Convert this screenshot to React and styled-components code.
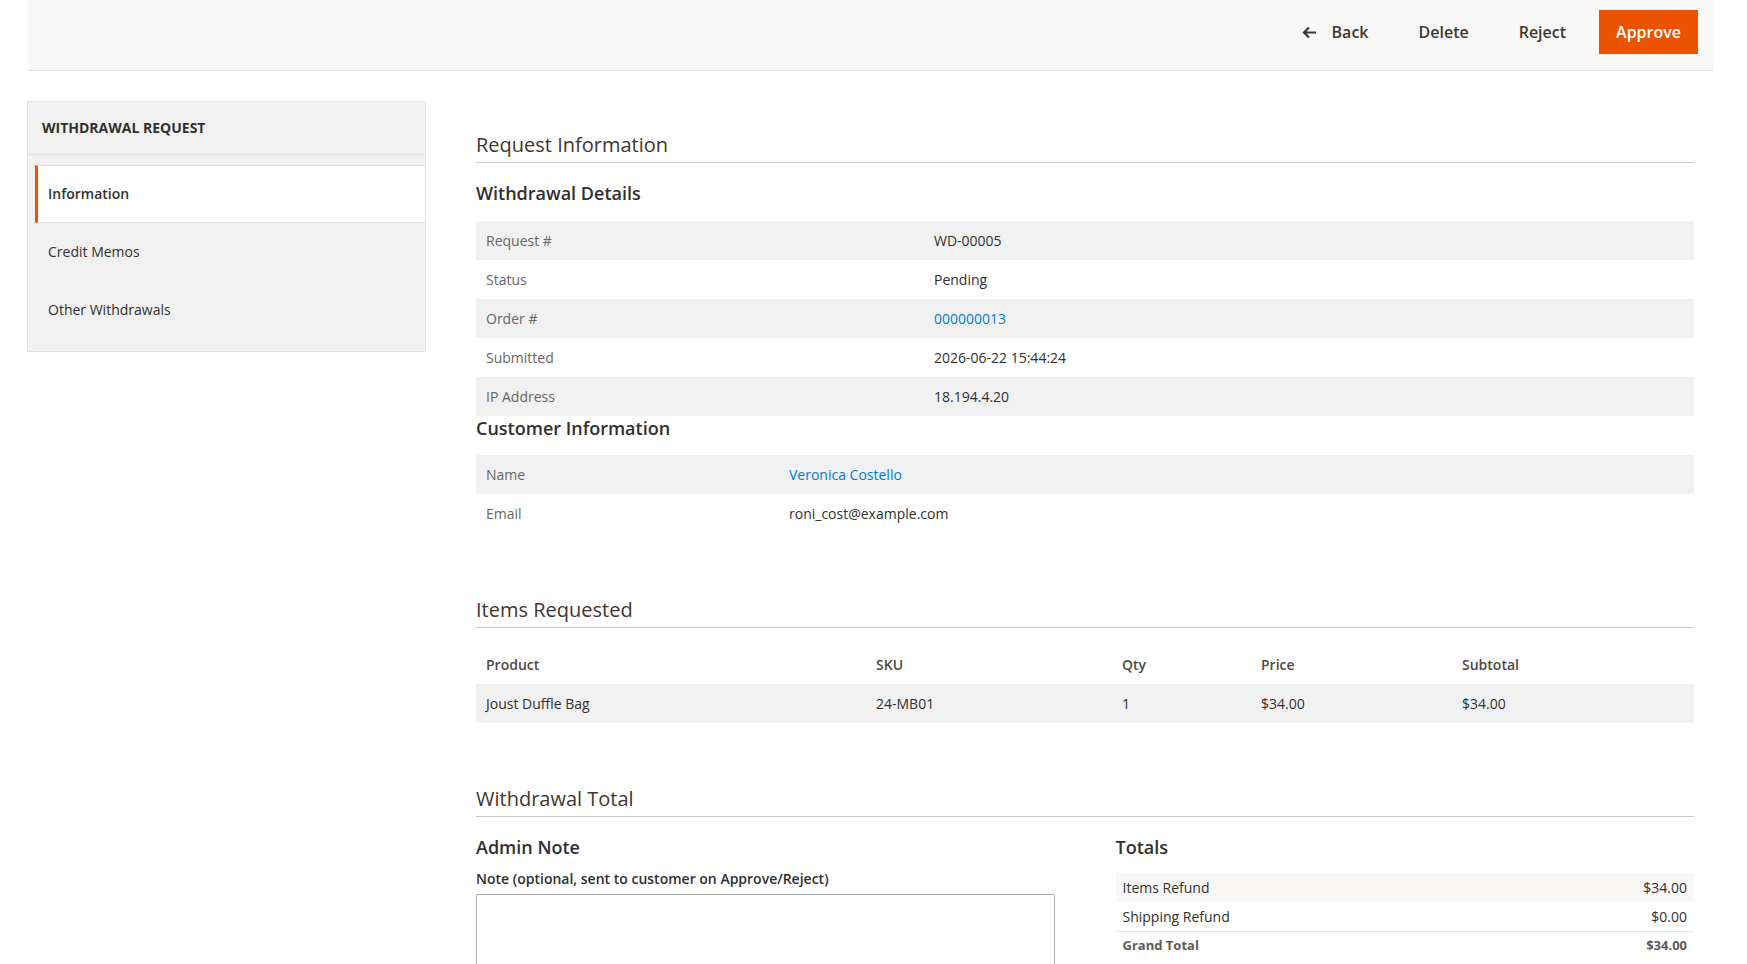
import React from "react";
import styled, { createGlobalStyle } from "styled-components";

const GlobalStyle = createGlobalStyle`
  html, body {
    margin: 0;
    padding: 0;
    background: #fff;
  }
  body {
    font-family: "Open Sans", "Liberation Sans", sans-serif;
    font-size: 14px;
    color: #303030;
  }
  * {
    box-sizing: border-box;
  }
`;

const Page = styled.div`
  padding: 0 33px 0 27px;
`;

const Header = styled.header`
  height: 71px;
  background: #f8f8f8;
  border-bottom: 1px solid #e3e3e3;
  display: flex;
  justify-content: flex-end;
  align-items: flex-start;
  gap: 16px;
  padding: 10px 16px 0 0;
`;

const ActionButton = styled.button`
  display: flex;
  align-items: center;
  gap: 15px;
  height: 44px;
  padding: 0 16px;
  border: 1px solid ${(p) => (p.$primary ? "#eb5202" : "transparent")};
  background: ${(p) => (p.$primary ? "#eb5202" : "transparent")};
  color: ${(p) => (p.$primary ? "#fff" : "#41362f")};
  font-family: inherit;
  font-size: 16px;
  font-weight: 600;
  cursor: pointer;
`;

const Columns = styled.div`
  display: grid;
  grid-template-columns: 399px 1fr;
  gap: 50px;
  margin-top: 30px;
  align-items: start;
`;

const Sidebar = styled.nav`
  background: #f1f1f1;
  border: 1px solid #e3e3e3;
  padding-bottom: 12px;
`;

const SidebarTitle = styled.div`
  padding: 16px 14px 17px;
  border-bottom: 1px solid #e3e3e3;
  font-size: 14px;
  line-height: 19px;
  font-weight: 700;
  text-transform: uppercase;
  color: #303030;
`;

const NavList = styled.ul`
  list-style: none;
  margin: 0;
  padding: 10px 0 0;
`;

const NavItem = styled.li`
  margin-left: 7px;
  padding: 18px 10px 19px;
  line-height: 19px;
  border-left: 3px solid ${(p) => (p.$active ? "#eb5202" : "transparent")};
  border-top: 1px solid ${(p) => (p.$active ? "#e3e3e3" : "transparent")};
  border-bottom: 1px solid ${(p) => (p.$active ? "#e3e3e3" : "transparent")};
  background: ${(p) => (p.$active ? "#fff" : "transparent")};
  font-weight: ${(p) => (p.$active ? 600 : 400)};
  color: #303030;
`;

const Main = styled.main`
  padding-right: 20px;
`;

const SectionTitle = styled.h2`
  margin: ${(p) => p.$top || 0}px 0 0;
  padding-bottom: 3px;
  border-bottom: 1px solid #cccccc;
  font-size: 20px;
  line-height: 28px;
  font-weight: 400;
  color: #41362f;
`;

const BlockTitle = styled.h3`
  margin: ${(p) => p.$top || 0}px 0 ${(p) => (p.$bottom == null ? 16 : p.$bottom)}px;
  font-size: 18px;
  line-height: 24px;
  font-weight: 600;
  color: #303030;
`;

const InfoTable = styled.table`
  width: 100%;
  border-collapse: collapse;
  table-layout: fixed;

  tr:nth-child(odd) {
    background: #f1f1f1;
  }

  th,
  td {
    padding: 10px;
    line-height: 19px;
    text-align: left;
    font-weight: 400;
    vertical-align: middle;
  }

  th {
    color: #666;
  }

  td {
    color: #303030;
  }
`;

const ItemsTable = styled.table`
  width: 100%;
  border-collapse: collapse;
  table-layout: fixed;
  margin-top: 17px;

  th,
  td {
    padding: 10px;
    line-height: 19px;
    text-align: left;
  }

  th {
    font-weight: 600;
    color: #514943;
  }

  tbody tr {
    background: #f1f1f1;
  }
`;

const Link = styled.a`
  color: #007bdb;
  text-decoration: none;
`;

const TotalGrid = styled.div`
  display: grid;
  grid-template-columns: 1fr 1fr;
  gap: 61px;
  margin-top: 18px;
`;

const NoteLabel = styled.label`
  display: block;
  margin-bottom: 6px;
  font-size: 14px;
  line-height: 19px;
  font-weight: 600;
  color: #303030;
`;

const NoteArea = styled.textarea`
  display: block;
  width: 100%;
  height: 130px;
  border: 1px solid #adadad;
  border-radius: 1px;
  resize: vertical;
  font-family: inherit;
  font-size: 14px;
`;

const TotalsTable = styled.table`
  width: 100%;
  border-collapse: collapse;

  td {
    padding: 5px 7px;
    line-height: 19px;
  }

  td:last-child {
    text-align: right;
  }
`;

const TotalRow = styled.tr`
  background: ${(p) => (p.$shade ? "#f9f8f6" : "transparent")};

  td {
    color: ${(p) => (p.$grand ? "#5f5a55" : "#303030")};
    font-weight: ${(p) => (p.$grand ? 700 : 400)};
    font-size: ${(p) => (p.$grand ? 13 : 14)}px;
    padding-top: ${(p) => (p.$grand ? 4 : 5)}px;
    border-top: ${(p) => (p.$grand ? "1px solid #e3e3e3" : "none")};
  }
`;

const BackArrow = () => (
  <svg width="15" height="13" viewBox="0 0 15 13" aria-hidden="true">
    <path
      d="M14 6.5H2.5M7 1.5L2 6.5L7 11.5"
      fill="none"
      stroke="#41362f"
      strokeWidth="2.2"
    />
  </svg>
);

const details = [
  ["Request #", "WD-00005"],
  ["Status", "Pending"],
  ["Order #", <Link href="#">000000013</Link>],
  ["Submitted", "2026-06-22 15:44:24"],
  ["IP Address", "18.194.4.20"],
];

const customer = [
  ["Name", <Link href="#">Veronica Costello</Link>],
  ["Email", "roni_cost@example.com"],
];

const App = () => {
  return (
    <Page>
      <GlobalStyle />
      <Header>
        <ActionButton>
          <BackArrow />
          Back
        </ActionButton>
        <ActionButton>Delete</ActionButton>
        <ActionButton>Reject</ActionButton>
        <ActionButton $primary>Approve</ActionButton>
      </Header>

      <Columns>
        <Sidebar>
          <SidebarTitle>Withdrawal Request</SidebarTitle>
          <NavList>
            <NavItem $active>Information</NavItem>
            <NavItem>Credit Memos</NavItem>
            <NavItem>Other Withdrawals</NavItem>
          </NavList>
        </Sidebar>

        <Main>
          <SectionTitle $top={30}>Request Information</SectionTitle>
          <BlockTitle $top={18}>Withdrawal Details</BlockTitle>
          <InfoTable>
            <colgroup>
              <col style={{ width: 448 }} />
              <col />
            </colgroup>
            <tbody>
              {details.map(([label, value]) => (
                <tr key={label}>
                  <th>{label}</th>
                  <td>{value}</td>
                </tr>
              ))}
            </tbody>
          </InfoTable>

          <BlockTitle $bottom={15}>Customer Information</BlockTitle>
          <InfoTable>
            <colgroup>
              <col style={{ width: 303 }} />
              <col />
            </colgroup>
            <tbody>
              {customer.map(([label, value]) => (
                <tr key={label}>
                  <th>{label}</th>
                  <td>{value}</td>
                </tr>
              ))}
            </tbody>
          </InfoTable>

          <SectionTitle $top={63}>Items Requested</SectionTitle>
          <ItemsTable>
            <colgroup>
              <col style={{ width: 390 }} />
              <col style={{ width: 246 }} />
              <col style={{ width: 139 }} />
              <col style={{ width: 201 }} />
              <col />
            </colgroup>
            <thead>
              <tr>
                <th>Product</th>
                <th>SKU</th>
                <th>Qty</th>
                <th>Price</th>
                <th>Subtotal</th>
              </tr>
            </thead>
            <tbody>
              <tr>
                <td>Joust Duffle Bag</td>
                <td>24-MB01</td>
                <td>1</td>
                <td>$34.00</td>
                <td>$34.00</td>
              </tr>
            </tbody>
          </ItemsTable>

          <SectionTitle $top={62}>Withdrawal Total</SectionTitle>
          <TotalGrid>
            <div>
              <BlockTitle $bottom={10}>Admin Note</BlockTitle>
              <NoteLabel htmlFor="admin-note">
                Note (optional, sent to customer on Approve/Reject)
              </NoteLabel>
              <NoteArea id="admin-note" />
            </div>
            <div>
              <BlockTitle $bottom={14}>Totals</BlockTitle>
              <TotalsTable>
                <tbody>
                  <TotalRow $shade>
                    <td>Items Refund</td>
                    <td>$34.00</td>
                  </TotalRow>
                  <TotalRow>
                    <td>Shipping Refund</td>
                    <td>$0.00</td>
                  </TotalRow>
                  <TotalRow $grand>
                    <td>Grand Total</td>
                    <td>$34.00</td>
                  </TotalRow>
                </tbody>
              </TotalsTable>
            </div>
          </TotalGrid>
        </Main>
      </Columns>
    </Page>
  );
};

export default App;
